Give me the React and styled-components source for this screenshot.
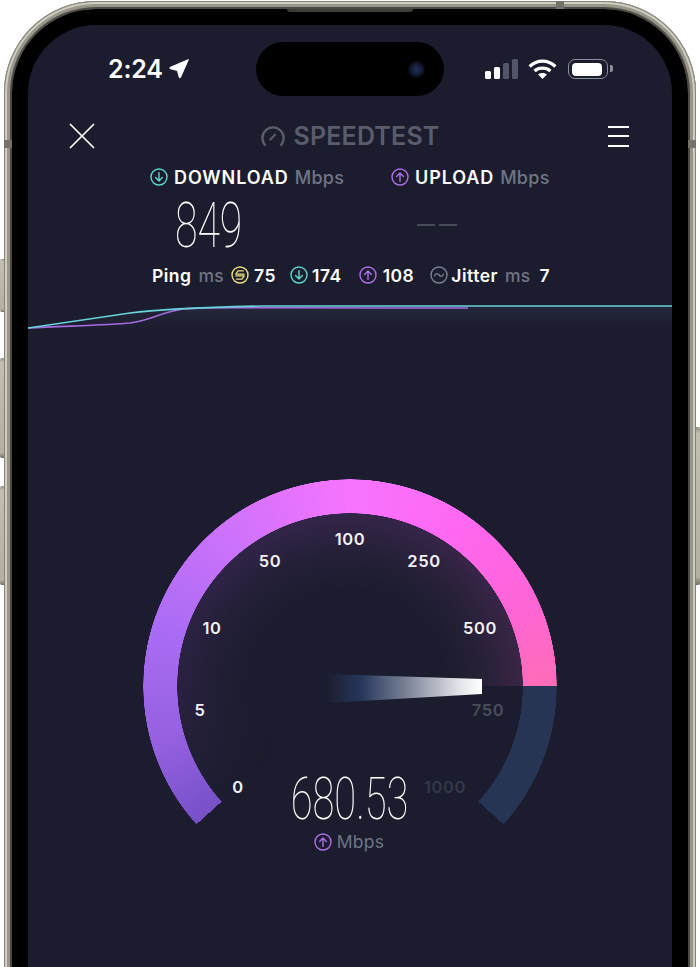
import React from "react";
import styled, { createGlobalStyle } from "styled-components";
import { X } from "lucide-react";

const GlobalStyle = createGlobalStyle`
  html, body {
    margin: 0;
    padding: 0;
    background: #fff;
    font-family: Inter, "Liberation Sans", sans-serif;
  }
`;

const Page = styled.div`
  position: relative;
  width: 700px;
  height: 967px;
  overflow: hidden;
  background: #fff;
  padding: 1px 4px 0;
  box-sizing: border-box;
`;

const SideButton = styled.div`
  position: absolute;
  top: ${(p) => p.$top}px;
  height: ${(p) => p.$height}px;
  width: 4px;
  ${(p) => (p.$right ? "right: 0;" : "left: 0;")}
  background: linear-gradient(to bottom, #8f8c7f, #c2bfb2 4%, #b3b0a3 95%, #6f6c61);
  border-radius: ${(p) => (p.$right ? "0 2px 2px 0" : "2px 0 0 2px")};
`;

const Frame = styled.div`
  position: relative;
  height: 1100px;
  padding: 8px 8px 0;
  box-sizing: border-box;
  border-radius: 92px;
  background: #aeab9e;
  box-shadow:
    inset 0 0 0 1px #85827a,
    inset 0 0 0 3px #cfccc0,
    inset 0 0 0 6px #98958a,
    inset 0 0 0 8px #4c4a44;
`;

const AntennaBand = styled.div`
  position: absolute;
  background: #75726a;
  ${(p) => p.$pos}
`;

const Speaker = styled.div`
  position: absolute;
  top: 8px;
  left: 283px;
  width: 126px;
  height: 3px;
  background: #3d3c38;
  border-radius: 0 0 3px 3px;
`;

const Bezel = styled.div`
  height: 100%;
  padding: 16px 16px 0;
  box-sizing: border-box;
  background: #000;
  border-radius: 84px;
`;

const Screen = styled.div`
  height: 100%;
  background: #1b1d2e;
  border-radius: 68px;
  color: #fff;
  overflow: hidden;
`;

const StatusBar = styled.div`
  display: flex;
  align-items: center;
  height: 85px;
  padding: 17px 0 14px 80px;
  box-sizing: border-box;
`;

const StatusLeft = styled.div`
  width: 148px;
  display: flex;
  align-items: center;
  gap: 6px;
`;

const Clock = styled.span`
  font-size: 25px;
  font-weight: 600;
  line-height: 1;
  letter-spacing: -0.2px;
`;

const Island = styled.div`
  width: 188px;
  height: 54px;
  border-radius: 27px;
  background: #000;
  display: flex;
  align-items: center;
  justify-content: flex-end;
  padding-right: 19px;
  box-sizing: border-box;
`;

const Camera = styled.div`
  width: 17px;
  height: 17px;
  border-radius: 50%;
  background: radial-gradient(circle, #1f2c58 0, #16203f 35%, #0a0b14 65%, #050507 100%);
`;

const StatusRight = styled.div`
  display: flex;
  align-items: center;
  margin-left: 41px;
`;

const Bars = styled.div`
  display: flex;
  align-items: flex-end;
  gap: 3px;
  height: 20px;
  margin-right: 10px;
`;

const Bar = styled.div`
  width: 6px;
  height: ${(p) => p.$h}px;
  border-radius: 1.5px;
  background: ${(p) => (p.$on ? "#fff" : "#53566a")};
`;

const Battery = styled.div`
  position: relative;
  width: 40px;
  height: 20px;
  margin-left: 11px;
  padding: 2.5px;
  box-sizing: border-box;
  border: 1.5px solid #8b8d9a;
  border-radius: 7px;

  &::after {
    content: "";
    position: absolute;
    right: -6px;
    top: 5px;
    width: 3px;
    height: 7px;
    background: #8b8d9a;
    border-radius: 0 2px 2px 0;
  }
`;

const BatteryFill = styled.div`
  width: 30px;
  height: 100%;
  background: #fff;
  border-radius: 4px;
`;

const Header = styled.div`
  height: 52px;
  display: flex;
  align-items: center;
  justify-content: space-between;
  padding: 0 43px 0 42px;
`;

const Logo = styled.div`
  display: flex;
  align-items: center;
  gap: 8px;
`;

const LogoText = styled.span`
  font-size: 25px;
  font-weight: 600;
  line-height: 1;
  color: #5a5c6b;
  letter-spacing: 0.2px;
`;

const MenuButton = styled.div`
  width: 21px;
  height: 21px;
  display: flex;
  flex-direction: column;
  justify-content: space-between;
`;

const MenuLine = styled.div`
  height: 2px;
  background: #fff;
`;

const Results = styled.div`
  display: grid;
  grid-template-columns: 241px 200px;
  padding-left: 122px;
`;

const ResultCol = styled.div`
  display: flex;
  flex-direction: column;
`;

const ResultLabel = styled.div`
  height: 30px;
  display: flex;
  align-items: center;
  gap: 6px;
  font-size: 18px;
  font-weight: 600;
  letter-spacing: 0.9px;
  white-space: nowrap;
`;

const Unit = styled.span`
  font-weight: 500;
  color: #717484;
  letter-spacing: 0.3px;
  margin-left: ${(p) => p.$gap || 0}px;
`;

const ResultValue = styled.div`
  height: 66px;
  display: flex;
  align-items: center;
  padding-left: 25px;
`;

const ThinNumber = styled.span`
  display: inline-block;
  font-family: Roboto, sans-serif;
  font-weight: 100;
  font-size: ${(p) => p.$size}px;
  line-height: 1;
  transform: scaleX(${(p) => p.$scale});
  transform-origin: ${(p) => p.$origin || "left"} center;
  white-space: nowrap;
`;

const Dashes = styled.div`
  display: flex;
  gap: 4px;
  margin: 0 0 0 1px;
`;

const Dash = styled.div`
  width: 18px;
  height: 2px;
  background: #484b5a;
`;

const PingRow = styled.div`
  height: 32px;
  margin-top: 1px;
  padding-left: 124px;
  display: flex;
  align-items: center;
  font-size: 17.5px;
  font-weight: 600;
  letter-spacing: 0.5px;
  white-space: nowrap;
`;

const PingItem = styled.div`
  display: flex;
  align-items: center;
  gap: ${(p) => p.$gap || 6}px;
  margin-left: ${(p) => p.$left || 0}px;
`;

const PlainValue = styled.span`
  margin-left: ${(p) => p.$gap || 0}px;
`;

const Graph = styled.svg`
  display: block;
  width: 644px;
  height: 50px;
  margin-top: 5px;
`;

const Gauge = styled.div`
  position: relative;
  width: 644px;
  height: 400px;
  margin-top: 124px;
`;

const Ring = styled.div`
  position: absolute;
  left: 115px;
  top: 9px;
  width: 414px;
  height: 414px;
  border-radius: 50%;
  background: conic-gradient(
    from 228deg,
    #7750c8 0deg,
    #9460e0 25deg,
    #ab6cf5 60deg,
    #cf72fb 95deg,
    #f674ff 132deg,
    #ff68f2 165deg,
    #ff64d8 195deg,
    #ff6cb8 222deg,
    #273554 222deg,
    #273554 264deg,
    transparent 264deg
  );
  mask-image: radial-gradient(circle, transparent 172.5px, #000 173px, #000 206.5px, transparent 207px);
`;

const Glow = styled.div`
  position: absolute;
  left: 149px;
  top: 43px;
  width: 346px;
  height: 346px;
  border-radius: 50%;
  background: conic-gradient(
    from 228deg,
    transparent 0deg,
    #2a2140 35deg,
    #33254a 110deg,
    #3b2647 222deg,
    transparent 222deg
  );
  mask-image: radial-gradient(circle, transparent 95px, rgba(0, 0, 0, 0.35) 130px, #000 173px);
`;

const Needle = styled.div`
  position: absolute;
  left: 298px;
  top: 202px;
  width: 156px;
  height: 32px;
  background: linear-gradient(to right, #1b1d2e 0, #25365a 22%, #7c8398 52%, #e2e3e8 85%, #fff 100%);
  clip-path: polygon(0 2px, 100% 7px, 100% 22px, 0 31px);
`;

const Tick = styled.span`
  position: absolute;
  left: ${(p) => p.$x - 28}px;
  top: ${(p) => p.$y - 470}px;
  transform: translate(-50%, -50%);
  font-size: 16.5px;
  font-weight: 600;
  letter-spacing: 0.6px;
  line-height: 1;
  color: ${(p) => p.$color || "#f2f2f5"};
`;

const Readout = styled.div`
  position: absolute;
  left: 222px;
  top: 299px;
  width: 200px;
  display: flex;
  flex-direction: column;
  align-items: center;
`;

const ReadoutUnit = styled.div`
  display: flex;
  align-items: center;
  gap: 5px;
  margin-top: 3px;
  margin-left: -2px;
  font-size: 17.5px;
  font-weight: 400;
  letter-spacing: 0.3px;
  line-height: 20px;
  color: #717484;
`;

const GREEN = "#5fd6cd";
const PURPLE = "#b06fe6";

const CircleIcon = ({ color, size = 18, children }) => (
  <svg width={size} height={size} viewBox="0 0 18 18" fill="none" stroke={color} strokeWidth="1.4" strokeLinecap="round" strokeLinejoin="round" style={{ flex: "none" }}>
    <circle cx="9" cy="9" r="8" />
    {children}
  </svg>
);

const DownIcon = () => (
  <CircleIcon color={GREEN}>
    <path d="M9 4.600v8.400M5.600 9.600 9 13l3.400-3.400" />
  </CircleIcon>
);

const UpIcon = () => (
  <CircleIcon color={PURPLE}>
    <path d="M9 13.400V5M5.600 8.400 9 5l3.400 3.400" />
  </CircleIcon>
);

const PingIcon = () => (
  <CircleIcon color="#f0e07c">
    <path d="M12.400 4.800 7 4.800 4.800 8.200h8.400M5.600 13.200l5.400 0 2.200-3.400H4.800" strokeWidth="1.200" />
  </CircleIcon>
);

const JitterIcon = () => (
  <CircleIcon color="#7d8090">
    <path d="M4.600 9.800C6 7 7.600 7 9 9s3 2 4.400-.8" />
  </CircleIcon>
);

const ticks = [
  { label: "0", x: 238, y: 787 },
  { label: "5", x: 200, y: 710 },
  { label: "10", x: 212, y: 628 },
  { label: "50", x: 270, y: 561 },
  { label: "100", x: 350, y: 539 },
  { label: "250", x: 424, y: 561 },
  { label: "500", x: 480, y: 628 },
  { label: "750", x: 488, y: 710, color: "#4a4d5c" },
  { label: "1000", x: 445, y: 787, color: "#34374a" },
];

export default function App() {
  return (
    <Page>
      <GlobalStyle />
      <SideButton $top={259} $height={53} />
      <SideButton $top={358} $height={100} />
      <SideButton $top={486} $height={99} />
      <SideButton $right $top={427} $height={158} />
      <Frame>
        <AntennaBand $pos="left: 0; top: 139px; width: 8px; height: 8px;" />
        <AntennaBand $pos="right: 0; top: 139px; width: 8px; height: 8px;" />
        <AntennaBand $pos="left: 552px; top: 0; width: 8px; height: 8px;" />
        <Speaker />
        <Bezel>
          <Screen>
            <StatusBar>
              <StatusLeft>
                <Clock>2:24</Clock>
                <svg width="20" height="20" viewBox="0 0 20 20">
                  <path d="M19.400.6 11.400 18.600c-.2.500-.9.500-1-.1L8.400 11.600 1.200 9.600C.6 9.400.6 8.700 1.100 8.400Z" fill="#fff" stroke="#fff" strokeWidth="1" strokeLinejoin="round" />
                </svg>
              </StatusLeft>
              <Island>
                <Camera />
              </Island>
              <StatusRight>
                <Bars>
                  <Bar $on $h={8} />
                  <Bar $on $h={12} />
                  <Bar $h={16} />
                  <Bar $h={20} />
                </Bars>
                <svg width="29" height="20" viewBox="0 0 29 20" fill="none" stroke="#fff" strokeWidth="3.4">
                  <path d="M1.600 7.400C9.200.4 19.800.4 27.400 7.400" />
                  <path d="M6.600 12c4.400-3.800 11.400-3.800 15.800 0" />
                  <path d="M14.500 20l-4.400-4.400c2.300-2 6.500-2 8.800 0Z" fill="#fff" stroke="none" />
                </svg>
                <Battery>
                  <BatteryFill />
                </Battery>
              </StatusRight>
            </StatusBar>

            <Header>
              <X size={46} color="#fff" strokeWidth={0.9} style={{ margin: "-11.5px" }} />
              <Logo>
                <svg width="24" height="22" viewBox="0 0 24 22" fill="none" stroke="#5a5c6b" strokeWidth="2.4" strokeLinecap="butt">
                  <path d="M4.500 20.500a10.600 10.600 0 1 1 15 0" />
                  <path d="M8.800 15.200 14.600 9" strokeWidth="2" />
                </svg>
                <LogoText>SPEEDTEST</LogoText>
              </Logo>
              <MenuButton>
                <MenuLine />
                <MenuLine />
                <MenuLine />
              </MenuButton>
            </Header>

            <Results>
              <ResultCol>
                <ResultLabel>
                  <DownIcon />
                  <span>
                    DOWNLOAD<Unit $gap={6}>Mbps</Unit>
                  </span>
                </ResultLabel>
                <ResultValue>
                  <ThinNumber $size={63} $scale={0.65}>849</ThinNumber>
                </ResultValue>
              </ResultCol>
              <ResultCol>
                <ResultLabel>
                  <UpIcon />
                  <span>
                    UPLOAD<Unit $gap={6}>Mbps</Unit>
                  </span>
                </ResultLabel>
                <ResultValue>
                  <Dashes>
                    <Dash />
                    <Dash />
                  </Dashes>
                </ResultValue>
              </ResultCol>
            </Results>

            <PingRow>
              <PingItem $gap={7}>
                Ping<Unit>ms</Unit>
                <PingIcon />
                <PlainValue $gap={-2}>75</PlainValue>
              </PingItem>
              <PingItem $left={14} $gap={4}>
                <DownIcon />
                174
              </PingItem>
              <PingItem $left={17}>
                <UpIcon />
                108
              </PingItem>
              <PingItem $left={16} $gap={3}>
                <JitterIcon />
                Jitter
                <Unit $gap={4}>ms</Unit>
                <PlainValue $gap={6}>7</PlainValue>
              </PingItem>
            </PingRow>

            <Graph viewBox="0 0 644 50" fill="none">
              <defs>
                <linearGradient id="graphFill" x1="0" y1="0" x2="0" y2="1">
                  <stop offset="0" stopColor="#24263a" />
                  <stop offset="1" stopColor="#1b1d2e" />
                </linearGradient>
              </defs>
              <path d="M0 32 L102 17 C125 14 150 12 235 10 L644 10 V34 H0 Z" fill="url(#graphFill)" />
              <path d="M0 32 C40 30 80 29 102 27 C125 24 130 17 155 13 C170 11 190 12 440 12" stroke="#a66be0" strokeWidth="1.6" />
              <path d="M0 32 L102 17 C125 14 150 12 235 10 L644 10" stroke="#67d3da" strokeWidth="1.6" />
            </Graph>

            <Gauge>
              <Glow />
              <Ring />
              <Needle />
              {ticks.map((t) => (
                <Tick key={t.label} $x={t.x} $y={t.y} $color={t.color}>
                  {t.label}
                </Tick>
              ))}
              <Readout>
                <ThinNumber $size={60} $scale={0.665} $origin="center">680.53</ThinNumber>
                <ReadoutUnit>
                  <UpIcon />
                  Mbps
                </ReadoutUnit>
              </Readout>
            </Gauge>
          </Screen>
        </Bezel>
      </Frame>
    </Page>
  );
}
